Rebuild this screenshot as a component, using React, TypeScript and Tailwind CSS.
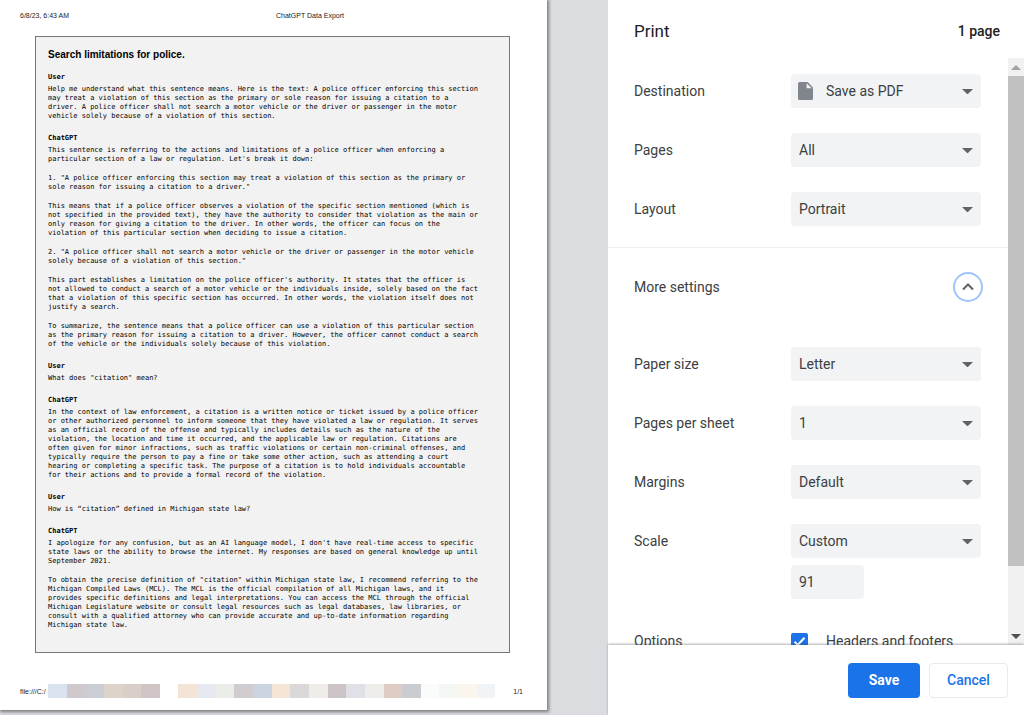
import React from 'react';
import { ChevronUp } from 'lucide-react';

const messages = [
  {
    author: 'User',
    paragraphs: [
      `Help me understand what this sentence means. Here is the text: A police officer enforcing this section
may treat a violation of this section as the primary or sole reason for issuing a citation to a
driver. A police officer shall not search a motor vehicle or the driver or passenger in the motor
vehicle solely because of a violation of this section.`,
    ],
  },
  {
    author: 'ChatGPT',
    paragraphs: [
      `This sentence is referring to the actions and limitations of a police officer when enforcing a
particular section of a law or regulation. Let's break it down:`,
      `1. "A police officer enforcing this section may treat a violation of this section as the primary or
sole reason for issuing a citation to a driver."`,
      `This means that if a police officer observes a violation of the specific section mentioned (which is
not specified in the provided text), they have the authority to consider that violation as the main or
only reason for giving a citation to the driver. In other words, the officer can focus on the
violation of this particular section when deciding to issue a citation.`,
      `2. "A police officer shall not search a motor vehicle or the driver or passenger in the motor vehicle
solely because of a violation of this section."`,
      `This part establishes a limitation on the police officer's authority. It states that the officer is
not allowed to conduct a search of a motor vehicle or the individuals inside, solely based on the fact
that a violation of this specific section has occurred. In other words, the violation itself does not
justify a search.`,
      `To summarize, the sentence means that a police officer can use a violation of this particular section
as the primary reason for issuing a citation to a driver. However, the officer cannot conduct a search
of the vehicle or the individuals solely because of this violation.`,
    ],
  },
  {
    author: 'User',
    paragraphs: [`What does "citation" mean?`],
  },
  {
    author: 'ChatGPT',
    paragraphs: [
      `In the context of law enforcement, a citation is a written notice or ticket issued by a police officer
or other authorized personnel to inform someone that they have violated a law or regulation. It serves
as an official record of the offense and typically includes details such as the nature of the
violation, the location and time it occurred, and the applicable law or regulation. Citations are
often given for minor infractions, such as traffic violations or certain non-criminal offenses, and
typically require the person to pay a fine or take some other action, such as attending a court
hearing or completing a specific task. The purpose of a citation is to hold individuals accountable
for their actions and to provide a formal record of the violation.`,
    ],
  },
  {
    author: 'User',
    paragraphs: [`How is “citation” defined in Michigan state law?`],
  },
  {
    author: 'ChatGPT',
    paragraphs: [
      `I apologize for any confusion, but as an AI language model, I don't have real-time access to specific
state laws or the ability to browse the internet. My responses are based on general knowledge up until
September 2021.`,
      `To obtain the precise definition of "citation" within Michigan state law, I recommend referring to the
Michigan Compiled Laws (MCL). The MCL is the official compilation of all Michigan laws, and it
provides specific definitions and legal interpretations. You can access the MCL through the official
Michigan Legislature website or consult legal resources such as legal databases, law libraries, or
consult with a qualified attorney who can provide accurate and up-to-date information regarding
Michigan state law.`,
    ],
  },
];

// blocks that cover the file path in the page footer
const redaction = [
  'bg-[#d9e3ef]', 'bg-[#cfc9cd]', 'bg-[#cacdd4]', 'bg-[#ddd3c8]', 'bg-[#d8cfc9]', 'bg-[#d0c5c5]',
  'bg-white', 'bg-[#f3e4d6]', 'bg-[#e6e9ef]', 'bg-[#ebede9]', 'bg-[#d1ccd0]', 'bg-[#cad3e0]',
  'bg-[#f4e5d4]', 'bg-[#dad8d8]', 'bg-[#f0ece7]', 'bg-[#cdc4c7]', 'bg-[#dfe1e6]', 'bg-[#eeede9]',
  'bg-[#dfccc4]', 'bg-[#cbcbd2]', 'bg-[#fafbfb]', 'bg-[#f4f6f3]', 'bg-[#faf6ee]', 'bg-[#f1f4f7]',
];

const Preview: React.FC = () => {
  return (
    <main className="flex-1 min-w-0 bg-[#dadce0] pr-[61px] pb-[5px]">
      <article className="flex flex-col h-full bg-white shadow-[1px_1px_3px_1px_rgba(60,64,67,0.6)] pl-5 pr-6 text-[7px] leading-[9px] text-[#222]">
        <header className="grid grid-cols-[256px_1fr] pt-[11px]">
          <span>6/8/23, 6:43 AM</span>
          <span>ChatGPT Data Export</span>
        </header>
        <section className="flex-1 mt-4 ml-[15px] mr-[13px] border border-[#777] bg-[#f2f2f2] px-3 pt-3 text-black">
          <h1 className="text-[10px] leading-3 font-bold mb-3">Search limitations for police.</h1>
          <div className="space-y-[13px] font-['DejaVu_Sans_Mono',monospace]">
            {messages.map((message, i) => (
              <div key={i}>
                <h2 className="font-bold mb-[3px]">{message.author}</h2>
                <div className="space-y-[10px]">
                  {message.paragraphs.map((text, j) => (
                    <p key={j} className="whitespace-pre">{text}</p>
                  ))}
                </div>
              </div>
            ))}
          </div>
        </section>
        <footer className="flex items-center mt-[31px] mb-3">
          <span className="w-7 shrink-0 overflow-hidden">file:///C:/</span>
          <div className="flex flex-1 h-[14px]">
            {redaction.map((color, i) => (
              <div key={i} className={`flex-1 ${color}`} />
            ))}
          </div>
          <span className="ml-[18px]">1/1</span>
        </footer>
      </article>
    </main>
  );
};

interface SelectRowProps {
  id: string;
  label: string;
  value: string;
  icon?: boolean;
}

const SelectRow: React.FC<SelectRowProps> = ({ id, label, value, icon }) => {
  return (
    <div className="flex items-center">
      <label htmlFor={id} className="w-[157px] shrink-0">{label}</label>
      <div className="relative flex-1">
        <select
          id={id}
          defaultValue={value}
          className={`appearance-none block w-full h-[34px] rounded bg-[#f1f3f4] pr-7 outline-none ${icon ? 'pl-[35px]' : 'pl-2'}`}
        >
          <option>{value}</option>
        </select>
        {icon && (
          <svg className="absolute left-[7px] top-2 w-[15px] h-[18px] pointer-events-none" viewBox="0 0 15 18">
            <path fill="#80868b" d="M1.5 0H9.6L15 5.4V16.5Q15 18 13.5 18H1.5Q0 18 0 16.5V1.5Q0 0 1.5 0Z" />
            <path fill="#f1f3f4" d="M8.6 1.3V6.3H13.7Z" />
          </svg>
        )}
        <svg className="absolute right-2 top-[15px] w-[11px] h-[5px] pointer-events-none" viewBox="0 0 11 5">
          <path fill="#5f6368" d="M0 0H11L5.5 5.4Z" />
        </svg>
      </div>
    </div>
  );
};

const Settings: React.FC = () => {
  return (
    <aside className="flex flex-col w-[416px] shrink-0 bg-white font-['Roboto',sans-serif] text-[14px] leading-5 text-[#3c4043]">
      <header className="flex items-center justify-between h-[58px] shrink-0 pl-[26px] pr-6 pt-1 text-[#202124]">
        <h1 className="text-[17px]">Print</h1>
        <span className="font-medium">1 page</span>
      </header>

      <div className="flex flex-1 min-h-0">
        <div className="flex-1 overflow-hidden">
          <div className="flex flex-col gap-[25px] pl-[26px] pr-[27px] pt-4 pb-[21px]">
            <SelectRow id="destination" label="Destination" value="Save as PDF" icon />
            <SelectRow id="pages" label="Pages" value="All" />
            <SelectRow id="layout" label="Layout" value="Portrait" />
          </div>
          <div className="flex items-center justify-between h-[78px] border-t border-[#eceef0] pl-[26px] pr-[25px]">
            <span>More settings</span>
            <button
              aria-label="More settings"
              className="flex items-center justify-center w-[30px] h-[30px] rounded-full border-2 border-[#a1c5fb] text-[#5f6368]"
            >
              <ChevronUp size={20} strokeWidth={2.5} strokeLinecap="butt" strokeLinejoin="miter" />
            </button>
          </div>
          <div className="flex flex-col gap-[25px] pl-[26px] pr-[27px] pt-[22px]">
            <SelectRow id="paper" label="Paper size" value="Letter" />
            <SelectRow id="sheet" label="Pages per sheet" value="1" />
            <SelectRow id="margins" label="Margins" value="Default" />
            <div>
              <SelectRow id="scale" label="Scale" value="Custom" />
              <input
                type="text"
                aria-label="Scale percentage"
                defaultValue="91"
                className="block w-[73px] h-[34px] mt-[7px] ml-[157px] rounded bg-[#f1f3f4] px-2 outline-none"
              />
            </div>
            <div className="flex items-center h-[34px]">
              <span className="w-[157px]">Options</span>
              <label className="relative flex items-center gap-[18px]">
                <input
                  type="checkbox"
                  defaultChecked
                  className="appearance-none w-[17px] h-[17px] rounded-xs bg-[#1a73e8]"
                />
                <svg className="absolute left-0 w-[17px] h-[17px] pointer-events-none" viewBox="0 0 17 17">
                  <path fill="none" stroke="#fff" strokeWidth="2" d="M3.5 8.8L6.7 12L13.5 4.8" />
                </svg>
                Headers and footers
              </label>
            </div>
          </div>
        </div>

        <div className="flex flex-col w-4 shrink-0 bg-[#f1f1f1]">
          <button aria-label="Scroll up" className="flex items-center justify-center h-[18px] shrink-0">
            <svg className="w-[10px] h-[5px]" viewBox="0 0 10 5">
              <path fill="#a3a3a3" d="M0 5L5 0L10 5Z" />
            </svg>
          </button>
          <div className="flex-1">
            <div className="h-[89%] bg-[#c1c1c1]" />
          </div>
          <button aria-label="Scroll down" className="flex items-center justify-center h-[18px] shrink-0">
            <svg className="w-[10px] h-[5px]" viewBox="0 0 10 5">
              <path fill="#505050" d="M0 0H10L5 5Z" />
            </svg>
          </button>
        </div>
      </div>

      <footer className="relative flex items-center justify-end gap-[9px] h-[70px] shrink-0 pr-4 bg-white shadow-[0_-1px_2px_rgba(60,64,67,0.4)]">
        <button className="w-[72px] h-[35px] rounded bg-[#1a73e8] font-bold text-white">Save</button>
        <button className="w-[79px] h-[35px] rounded border border-[#e8eaed] font-medium text-[#1a73e8]">Cancel</button>
      </footer>
    </aside>
  );
};

export default function App() {
  return (
    <div className="flex h-screen overflow-hidden font-['Liberation_Sans',Arial,sans-serif]">
      <Preview />
      <Settings />
    </div>
  );
}
